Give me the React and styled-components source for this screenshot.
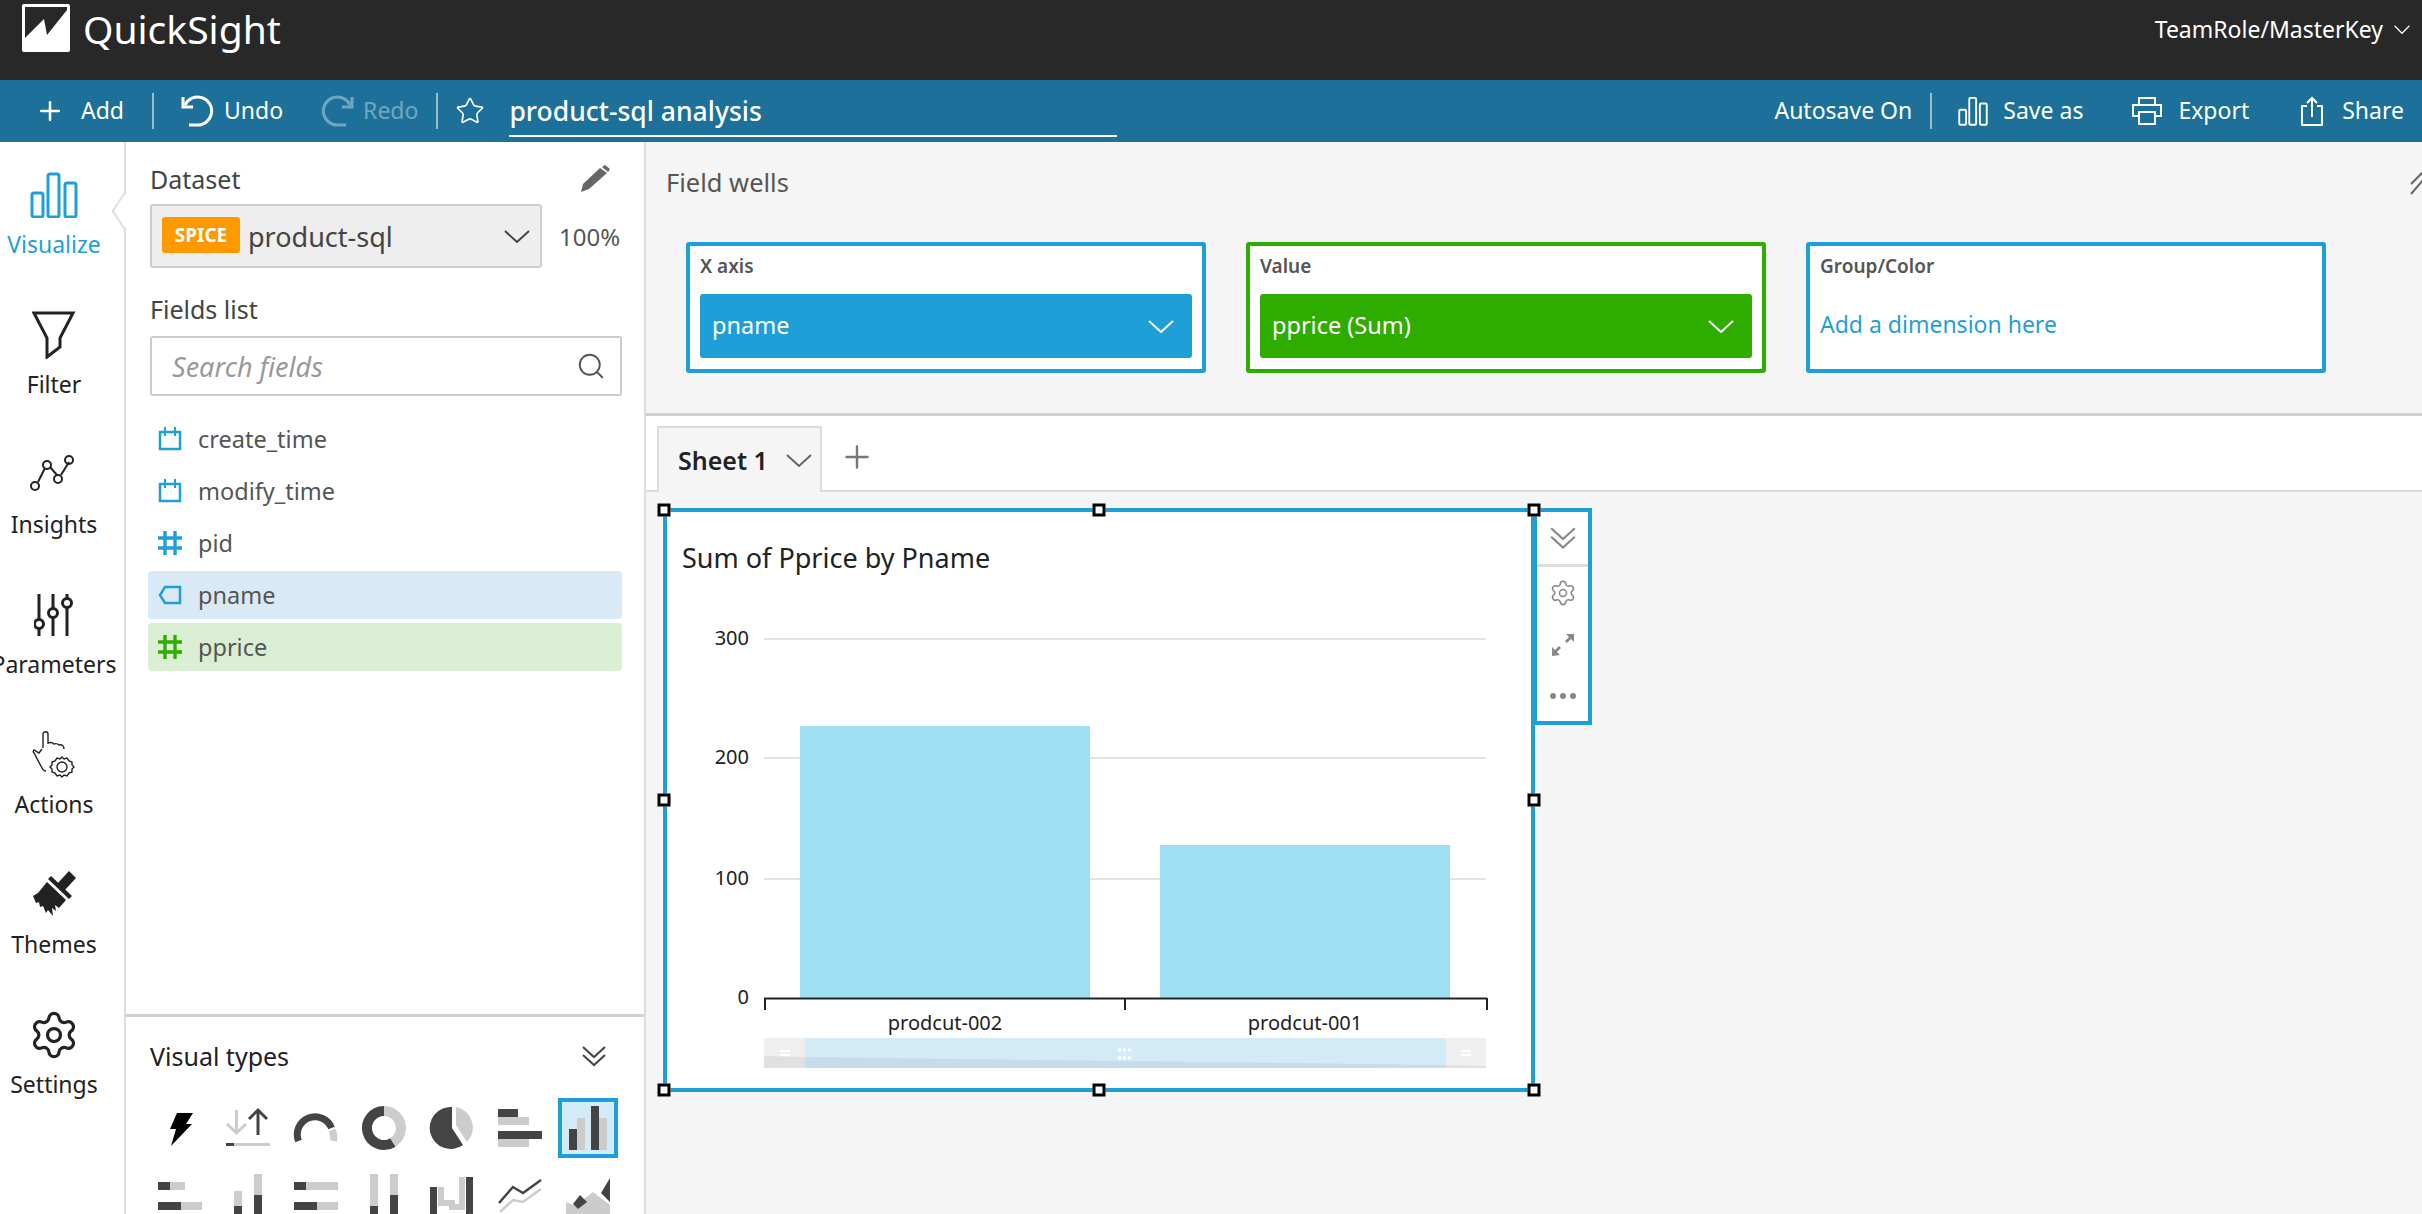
import React from "react";
import styled, { createGlobalStyle } from "styled-components";
import { Plus, Star, Search, Settings } from "lucide-react";

const BLUE = "#1f9fd8";
const GREEN = "#2eac00";

const GlobalStyle = createGlobalStyle`
  html, body { margin: 0; padding: 0; height: 100%; overflow: hidden; background: #fff; }
  body { font-family: "Noto Sans", "Open Sans", sans-serif; color: #222; }
  * { box-sizing: border-box; }
`;

const Page = styled.div`
  width: 2422px;
  height: 1214px;
  display: flex;
  flex-direction: column;
  overflow: hidden;
`;

/* top bars */
const Header = styled.header`
  height: 80px;
  flex: none;
  background: #282828;
  display: flex;
  justify-content: space-between;
  color: #fff;
`;
const Brand = styled.div`
  display: flex;
  align-items: flex-start;
  gap: 13px;
  padding: 4px 0 0 22px;
`;
const BrandName = styled.div`
  font-size: 39px;
  line-height: 49px;
`;
const User = styled.div`
  display: flex;
  align-items: center;
  gap: 11px;
  height: 58px;
  padding-right: 12px;
  font-size: 23px;
`;
const Toolbar = styled.div`
  height: 62px;
  flex: none;
  background: #1c7099;
  display: flex;
  align-items: center;
  justify-content: space-between;
  color: #fff;
  font-size: 23px;
`;
const ToolGroup = styled.div`
  display: flex;
  align-items: center;
`;
const ToolButton = styled.div`
  display: flex;
  align-items: center;
  gap: ${(p) => p.$gap || 12}px;
  margin-left: ${(p) => p.$ml || 0}px;
  opacity: ${(p) => (p.$off ? 0.38 : 1)};
  span { margin-top: -2px; }
`;
const Sep = styled.div`
  width: 2px;
  height: 36px;
  background: rgba(255, 255, 255, 0.55);
  margin-left: ${(p) => p.$ml}px;
`;
const TitleField = styled.div`
  width: 608px;
  height: 46px;
  margin: 6px 0 0 24px;
  border-bottom: 2px solid #fff;
  font-size: 26.5px;
  line-height: 40px;
  font-weight: 500;
`;
const ToolEnd = styled.div`
  width: 18px;
`;

/* body */
const Body = styled.div`
  flex: 1;
  display: flex;
  min-height: 0;
`;
const Rail = styled.nav`
  width: 126px;
  flex: none;
  border-right: 2px solid #ddd;
  padding-top: 23px;
  position: relative;
`;
const RailItem = styled.div`
  height: 140px;
  display: flex;
  flex-direction: column;
  align-items: center;
  width: 108px;
  color: ${(p) => (p.$active ? BLUE : "#222")};
`;
const RailIcon = styled.div`
  height: 60px;
  display: flex;
  align-items: center;
  justify-content: center;
`;
const RailLabel = styled.div`
  margin-top: 4px;
  font-size: 23px;
  line-height: 30px;
  white-space: nowrap;
`;
const Notch = styled.div`
  position: absolute;
  top: 58px;
  right: -2px;
  width: 22px;
  height: 22px;
  margin-right: -9px;
  transform: rotate(45deg) skew(12deg, 12deg);
  background: #fff;
  border-left: 2px solid #ddd;
  border-bottom: 2px solid #ddd;
  z-index: 1;
`;

const Panel = styled.aside`
  width: 520px;
  flex: none;
  border-right: 2px solid #ddd;
  display: flex;
  flex-direction: column;
  overflow: hidden;
  position: relative;
`;
const FieldsPane = styled.div`
  height: 875px;
  flex: none;
  padding: 20px 22px 0 24px;
  border-bottom: 3px solid #d0d0d0;
`;
const PaneHead = styled.div`
  display: flex;
  justify-content: space-between;
  align-items: center;
  height: 34px;
  margin-top: ${(p) => p.$mt || 0}px;
  font-size: 25px;
  color: ${(p) => p.$color || "#444"};
  padding-right: ${(p) => p.$pr || 0}px;
`;
const DatasetRow = styled.div`
  display: flex;
  align-items: center;
  margin-top: 8px;
  gap: 17px;
`;
const DatasetSelect = styled.div`
  width: 392px;
  height: 64px;
  background: #eee;
  border: 2px solid #ccc;
  border-radius: 3px;
  display: flex;
  align-items: center;
  padding: 0 10px 0 10px;
`;
const Spice = styled.div`
  width: 78px;
  height: 36px;
  margin-top: -2px;
  border-radius: 3px;
  background: #ff9900;
  color: #fff;
  font-weight: 700;
  font-size: 19px;
  display: flex;
  align-items: center;
  justify-content: center;
`;
const DatasetName = styled.div`
  flex: 1;
  margin-left: 8px;
  font-size: 27px;
  color: #444;
`;
const Percent = styled.div`
  font-size: 24px;
  color: #555;
`;
const SearchBox = styled.div`
  width: 472px;
  height: 60px;
  margin-top: 10px;
  border: 2px solid #ccc;
  border-radius: 3px;
  padding: 0 14px 0 20px;
  display: flex;
  align-items: center;
  justify-content: space-between;
  font-size: 27px;
  font-style: italic;
  color: #999;
`;
const FieldList = styled.div`
  margin: 19px 0 0 -2px;
  display: flex;
  flex-direction: column;
  gap: 4px;
  width: 474px;
`;
const FieldRow = styled.div`
  height: 48px;
  border-radius: 4px;
  background: ${(p) => p.$bg || "transparent"};
  display: flex;
  align-items: center;
  gap: 16px;
  padding-left: 10px;
  font-size: 23.5px;
  color: #555;
`;
const TypesPane = styled.div`
  padding: 22px 0 0 24px;
  flex: 1;
`;
const TypeGrid = styled.div`
  display: grid;
  grid-template-columns: repeat(7, 68px);
  grid-auto-rows: 60px;
  row-gap: 12px;
  margin: 25px 0 0 0;
`;
const TypeCell = styled.div`
  width: 60px;
  height: 60px;
  border: ${(p) => (p.$selected ? `4px solid ${BLUE}` : "0")};
  background: ${(p) => (p.$selected ? "#d2ebf7" : "transparent")};
  position: relative;
  svg { position: absolute; left: ${(p) => (p.$selected ? -4 : 0)}px; top: ${(p) => (p.$selected ? -4 : 0)}px; }
`;

/* main */
const Main = styled.main`
  flex: 1;
  display: flex;
  flex-direction: column;
  min-width: 0;
`;
const Wells = styled.section`
  height: 274px;
  flex: none;
  background: #f5f5f5;
  border-bottom: 3px solid #d0d0d0;
  padding: 24px 0 0 20px;
  position: relative;
`;
const WellsTitle = styled.div`
  font-size: 25.5px;
  line-height: 32px;
  color: #555;
`;
const WellRow = styled.div`
  display: flex;
  gap: 40px;
  margin: 44px 0 0 20px;
`;
const Well = styled.div`
  width: 520px;
  height: 131px;
  background: #fff;
  border: 4px solid ${(p) => p.$color};
  border-radius: 3px;
  padding: 7px 10px 10px;
`;
const WellLabel = styled.div`
  font-size: 19px;
  line-height: 26px;
  font-weight: 600;
  color: #555;
`;
const Pill = styled.div`
  height: 64px;
  margin-top: 15px;
  border-radius: 3px;
  background: ${(p) => p.$color};
  color: #fff;
  font-size: 23.5px;
  padding: 0 18px 0 12px;
  display: flex;
  align-items: center;
  justify-content: space-between;
  span { margin-top: -2px; }
`;
const AddHint = styled.div`
  margin-top: 30px;
  font-size: 23px;
  line-height: 30px;
  color: ${BLUE};
`;
const CollapseMark = styled.div`
  position: absolute;
  right: 0;
  top: 28px;
  color: #666;
`;
const TabBar = styled.div`
  height: 76px;
  flex: none;
  border-bottom: 2px solid #ddd;
  display: flex;
  align-items: flex-end;
  padding-left: 11px;
`;
const Tab = styled.div`
  width: 165px;
  height: 66px;
  margin-bottom: -2px;
  background: #f5f5f5;
  border: 2px solid #ddd;
  border-bottom: 0;
  display: flex;
  align-items: center;
  gap: 18px;
  padding-left: 19px;
  font-size: 25px;
  font-weight: 600;
  color: #222;
`;
const AddTab = styled.div`
  margin: 0 0 15px 17px;
  color: #777;
  display: flex;
`;
const Canvas = styled.div`
  flex: 1;
  background: #f5f5f5;
  padding: 16px 0 0 17px;
  display: flex;
  align-items: flex-start;
`;
const Visual = styled.div`
  width: 872px;
  height: 584px;
  background: #fff;
  border: 4px solid ${BLUE};
  position: relative;
`;
const Handle = styled.div`
  position: absolute;
  left: calc(-3px + ${(p) => p.$x} * 8.7px);
  top: calc(-2px + ${(p) => p.$y} * 5.8px);
  width: 13px;
  height: 13px;
  transform: translate(-50%, -50%);
  background: #fff;
  border: 3px solid #000;
  z-index: 2;
`;
const VisualTitle = styled.div`
  padding: 28px 0 0 15px;
  font-size: 27px;
  line-height: 36px;
  color: #222;
`;
const ChartSvg = styled.svg`
  position: absolute;
  left: 0;
  top: 0;
  text {
    font-family: "Noto Sans", "Open Sans", sans-serif;
    font-size: 20px;
    fill: #222;
  }
`;
const VisualTools = styled.div`
  width: 58px;
  height: 217px;
  margin-left: -1px;
  background: #fff;
  border: 4px solid ${BLUE};
  border-left-width: 3px;
  display: flex;
  flex-direction: column;
  align-items: center;
  color: #888;
`;
const VisualTool = styled.div`
  height: ${(p) => p.$h}px;
  width: 100%;
  display: flex;
  align-items: center;
  justify-content: center;
  border-bottom: ${(p) => (p.$line ? "3px solid #ddd" : "0")};
`;

/* drawings */
const Logo = () => (
  <svg width="48" height="48" viewBox="0 0 48 48">
    <rect width="48" height="48" rx="2" fill="#fff" />
    <path d="M3 3H45V6L25 31L22 15L3 34Z" fill="#282828" />
  </svg>
);
const BarsIcon = ({ w = 48, h = 46, sw = 3 }) => (
  <svg width={w} height={h} viewBox="0 0 48 46" fill="none" stroke="currentColor" strokeWidth={sw}>
    <rect x="2" y="21" width="11" height="24" rx="2" />
    <rect x="18" y="2" width="11" height="43" rx="2" />
    <rect x="35" y="11" width="11" height="34" rx="2" />
  </svg>
);
const UndoIcon = ({ flip }) => (
  <svg width="34" height="32" viewBox="0 0 34 32" fill="none" stroke="currentColor" strokeWidth="3"
    style={flip ? { transform: "scaleX(-1)" } : undefined}>
    <path d="M5 10A14 14 0 1 1 17 30H9" />
    <path d="M3 2V12H13" />
  </svg>
);
const PrinterIcon = () => (
  <svg width="30" height="28" viewBox="0 0 30 28" fill="none" stroke="currentColor" strokeWidth="2">
    <path d="M7 19H1V8h28v11h-6" />
    <path d="M7 8V1h16v7" />
    <rect x="7" y="15" width="16" height="12" />
  </svg>
);
const ShareIcon = () => (
  <svg width="22" height="30" viewBox="0 0 22 30" fill="none" stroke="currentColor" strokeWidth="2">
    <path d="M6 10H1v19h20V10h-5" />
    <path d="M11 21V2M6 7l5-5 5 5" />
  </svg>
);
const PencilIcon = () => (
  <svg width="30" height="28" viewBox="0 0 30 28" fill="#666">
    <path d="M1 27l2-8L20 3l7 5L9 24z" />
    <path d="M22 2l3-2 5 4-2 3z" />
  </svg>
);
const Chevron = ({ w = 26, h = 13, sw = 2, color = "currentColor" }) => (
  <svg width={w} height={h} viewBox="0 0 26 13" fill="none" stroke={color} strokeWidth={sw} preserveAspectRatio="none">
    <path d="M1 1l12 11L25 1" />
  </svg>
);
const DoubleChevron = ({ size = 26, color = "#444" }) => (
  <svg width={size} height={size * 0.85} viewBox="0 0 26 22" fill="none" stroke={color} strokeWidth="2">
    <path d="M2 2l11 10L24 2M2 10l11 10 11-10" />
  </svg>
);
const FilterIcon = () => (
  <svg width="44" height="48" viewBox="0 0 44 48" fill="none" stroke="currentColor" strokeWidth="3">
    <path d="M2 2H41L28 27V36L15 46V27Z" />
  </svg>
);
const InsightsIcon = () => (
  <svg width="48" height="40" viewBox="0 0 48 40" fill="none" stroke="currentColor" strokeWidth="2">
    <path d="M8 27L15 13M20 12L27 20M31 20L39 7" />
    <circle cx="5" cy="31" r="4" />
    <circle cx="17" cy="10" r="4" />
    <circle cx="28" cy="24" r="4" />
    <circle cx="39" cy="5" r="4" />
  </svg>
);
const ParamsIcon = () => (
  <svg width="40" height="44" viewBox="0 0 40 44" fill="none" stroke="currentColor" strokeWidth="3">
    <path d="M5 1V26M5 36V43M19 1V15M19 25V43M33 1V5M33 15V43" />
    <circle cx="5" cy="31" r="4.5" />
    <circle cx="19" cy="20" r="4.5" />
    <circle cx="33" cy="10" r="4.5" />
  </svg>
);
const ActionsIcon = () => (
  <svg width="44" height="48" viewBox="0 0 44 48" fill="none" stroke="currentColor" strokeWidth="1.4">
    <path d="M11 17V3c0-3 5-3 5 0v9c3-1 5 0 6 1 3-1 4 0 5 1 3-1 5 1 5 4" />
    <path d="M10 18L7 22l-5-3c-1 1-1 2 0 3l8 15c1 2 2 3 4 3" />
    <circle cx="30" cy="36" r="5" />
    <path d="M30 26l2 2 3-1 2 3 3 1v3l2 2-2 2v3l-3 1-2 3-3-1-2 2-2-2-3 1-2-3-3-1v-3l-2-2 2-2v-3l3-1 2-3 3 1z" />
  </svg>
);
const ThemesIcon = () => (
  <svg width="50" height="50" viewBox="0 0 50 50" fill="currentColor">
    <path d="M40 1l7 7-12 13-7-7z" />
    <path d="M19 9l3-3 21 20-3 3z" />
    <path d="M18 12l19 18-7 8-4-3 1 6-4-3 1 8-5-6-2 3-3-7-3 1-1-5-3 1-3-7 5-3z" />
  </svg>
);
const CalendarIcon = () => (
  <svg width="24" height="24" viewBox="0 0 24 24" fill="none" stroke={BLUE} strokeWidth="2.5">
    <path d="M2 5H22V22H2Z" />
    <path d="M7 0V9M17 0V9" strokeWidth="2" />
  </svg>
);
const HashIcon = ({ color }) => (
  <svg width="24" height="26" viewBox="0 0 24 26" fill="none" stroke={color} strokeWidth="3.4">
    <path d="M7 1V25M17 1V25M0 8H24M0 18H24" />
  </svg>
);
const TagIcon = () => (
  <svg width="24" height="20" viewBox="0 0 24 20" fill="none" stroke={BLUE} strokeWidth="2.5">
    <path d="M7 2H22V18H7L2 10Z" />
  </svg>
);
const ExpandIcon = () => (
  <svg width="24" height="24" viewBox="0 0 24 24" fill="#888">
    <path d="M15 1h8v8l-3-3-4 4-2-2 4-4z" />
    <path d="M1 23v-9l3 3 4-4 2 2-4 4 3 3z" />
  </svg>
);
const DotsIcon = () => (
  <svg width="28" height="8" viewBox="0 0 28 8" fill="#888">
    <circle cx="4" cy="4" r="3" />
    <circle cx="14" cy="4" r="3" />
    <circle cx="24" cy="4" r="3" />
  </svg>
);

const D = "#444";
const G = "#ccc";
const Rects = ({ items }) => items.map(([x, y, w, h, c], i) => <rect key={i} x={x} y={y} width={w} height={h} fill={c} />);
const visualTypes = [
  <path key="a" d="M27 15h16l-7 11h6L21 48l5-17h-6z" fill="#000" />,
  <g key="b" fill="none" strokeWidth="3">
    <path d="M18.5 12V35M9 26l9.5 9 9.5-9" stroke={G} />
    <path d="M40 12V37M31 21l9-9 9 9" stroke={D} />
    <rect x="8" y="45" width="44" height="3" fill={G} stroke="none" />
    <rect x="8" y="45" width="8" height="3" fill={D} stroke="none" />
  </g>,
  <g key="c" fill="none" strokeWidth="7">
    <path d="M12.5 43A17.5 17.5 0 0 1 45.5 30" stroke={D} />
    <path d="M46 32A17.5 17.5 0 0 1 47.5 43" stroke={G} />
  </g>,
  <g key="d" fill="none" strokeWidth="10">
    <path d="M39 44.4A17 17 0 1 1 30 13" stroke={D} />
    <path d="M30 13A17 17 0 0 1 39 44.4" stroke={G} />
  </g>,
  <g key="e">
    <path d="M30 30L41 47A21 21 0 1 1 30 9Z" fill={D} />
    <path d="M34 9A21 21 0 0 1 45 44L34 27Z" fill={G} />
  </g>,
  <Rects key="f" items={[[8, 11, 20, 8, D], [8, 19, 31, 8, G], [8, 33, 44, 8, D], [8, 41, 31, 8, G]]} />,
  <Rects key="g" items={[[11, 31, 8, 21, D], [19, 20, 8, 32, G], [33, 8, 8, 44, D], [41, 20, 8, 32, G]]} />,
  <Rects key="h" items={[[8, 12, 12, 8, D], [20, 12, 15, 8, G], [8, 32, 23, 8, D], [31, 32, 21, 8, G]]} />,
  <Rects key="i" items={[[16, 21, 8, 15, G], [16, 36, 8, 24, D], [36, 4, 8, 21, G], [36, 25, 8, 35, D]]} />,
  <Rects key="j" items={[[8, 12, 12, 8, D], [20, 12, 32, 8, G], [8, 32, 23, 8, D], [31, 32, 21, 8, G]]} />,
  <Rects key="k" items={[[16, 4, 8, 32, G], [16, 36, 8, 24, D], [36, 4, 8, 21, G], [36, 25, 8, 35, D]]} />,
  <g key="l">
    <path d="M19 17V33H30V37H40V7" fill="none" stroke={G} strokeWidth="6" />
    <rect x="8" y="17" width="7" height="43" fill={D} />
    <rect x="44" y="7" width="7" height="53" fill={D} />
  </g>,
  <g key="m" fill="none" strokeWidth="2.5">
    <path d="M9 33L23 17L33 23L51 10" stroke={D} />
    <path d="M10 42L23 30L33 32L51 19" stroke={G} />
  </g>,
  <g key="n">
    <path d="M8 32L17 36L35 22L52 35V60H8Z" fill={G} />
    <path d="M22 25l7 7-9 7-5-5z" fill={D} />
    <path d="M52 8V32L43 23z" fill={D} />
  </g>,
];

const railItems = [
  { label: "Visualize", icon: <BarsIcon />, active: true },
  { label: "Filter", icon: <FilterIcon /> },
  { label: "Insights", icon: <InsightsIcon /> },
  { label: "Parameters", icon: <ParamsIcon /> },
  { label: "Actions", icon: <ActionsIcon /> },
  { label: "Themes", icon: <ThemesIcon /> },
  { label: "Settings", icon: <Settings size={52} strokeWidth={1.5} /> },
];

const fields = [
  { name: "create_time", icon: <CalendarIcon /> },
  { name: "modify_time", icon: <CalendarIcon /> },
  { name: "pid", icon: <HashIcon color={BLUE} /> },
  { name: "pname", icon: <TagIcon />, bg: "#d9e9f6" },
  { name: "pprice", icon: <HashIcon color={GREEN} />, bg: "#d9eed3" },
];

// chart numbers are page pixels, the viewBox starts at the visual's origin
const ox = 667;
const oy = 512;
const BarChart = () => (
  <ChartSvg width="864" height="576" viewBox={`${ox} ${oy} 864 576`}>
    {[[639, "300"], [758, "200"], [879, "100"]].map(([y, t]) => (
      <g key={t}>
        <line x1="764" x2="1486" y1={y} y2={y} stroke="#e2e2e2" strokeWidth="2" />
        <text x="749" y={y + 6} textAnchor="end">{t}</text>
      </g>
    ))}
    <text x="749" y="1004" textAnchor="end">0</text>
    <rect x="800" y="726" width="290" height="272" fill="#9edff2" />
    <rect x="1160" y="845" width="290" height="153" fill="#9edff2" />
    <path d="M764 998.5H1487M765 998V1010M1125 998V1010M1487 998V1010" stroke="#222" strokeWidth="2" fill="none" />
    <text x="945" y="1030" textAnchor="middle">prodcut-002</text>
    <text x="1305" y="1030" textAnchor="middle">prodcut-001</text>
    <rect x="764" y="1038" width="722" height="30" fill="#efefef" />
    <path d="M764 1056L805 1057V1068H764ZM1446 1065L1486 1066V1068H1446Z" fill="#e0e0e0" />
    <rect x="805" y="1038" width="641" height="30" fill="#d3ebf7" />
    <path d="M805 1057L1446 1065V1068H805Z" fill="#c5dde9" />
    <path d="M780 1051h10M780 1055h10M1461 1051h10M1461 1055h10" stroke="#fff" strokeWidth="2" />
    <path d="M1118 1050h14M1118 1058h14" stroke="#fff" strokeWidth="3" strokeDasharray="3 2" />
  </ChartSvg>
);

const handles = [[0, 0], [50, 0], [100, 0], [0, 50], [100, 50], [0, 100], [50, 100], [100, 100]];

export default function App() {
  return (
    <Page>
      <GlobalStyle />
      <Header>
        <Brand>
          <Logo />
          <BrandName>QuickSight</BrandName>
        </Brand>
        <User>
          TeamRole/MasterKey
          <Chevron w={16} h={9} sw={2} />
        </User>
      </Header>
      <Toolbar>
        <ToolGroup>
          <ToolButton $ml={35} $gap={16}><Plus size={30} strokeWidth={2} /><span>Add</span></ToolButton>
          <Sep $ml={28} />
          <ToolButton $ml={26} $gap={10}><UndoIcon /><span>Undo</span></ToolButton>
          <ToolButton $ml={38} $gap={8} $off><UndoIcon flip /><span>Redo</span></ToolButton>
          <Sep $ml={18} />
          <ToolButton $ml={17}><Star size={30} strokeWidth={1.3} /></ToolButton>
          <TitleField>product-sql analysis</TitleField>
        </ToolGroup>
        <ToolGroup>
          <ToolButton><span>Autosave On</span></ToolButton>
          <Sep $ml={18} />
          <ToolButton $ml={26} $gap={15}><BarsIcon w={30} h={30} sw={3} /><span>Save as</span></ToolButton>
          <ToolButton $ml={49} $gap={16}><PrinterIcon /><span>Export</span></ToolButton>
          <ToolButton $ml={52} $gap={19}><ShareIcon /><span>Share</span></ToolButton>
          <ToolEnd />
        </ToolGroup>
      </Toolbar>
      <Body>
        <Rail>
          <Notch />
          {railItems.map((item) => (
            <RailItem key={item.label} $active={item.active}>
              <RailIcon>{item.icon}</RailIcon>
              <RailLabel>{item.label}</RailLabel>
            </RailItem>
          ))}
        </Rail>
        <Panel>
          <FieldsPane>
            <PaneHead $pr={12}>Dataset<PencilIcon /></PaneHead>
            <DatasetRow>
              <DatasetSelect>
                <Spice>SPICE</Spice>
                <DatasetName>product-sql</DatasetName>
                <Chevron color="#444" />
              </DatasetSelect>
              <Percent>100%</Percent>
            </DatasetRow>
            <PaneHead $mt={24}>Fields list</PaneHead>
            <SearchBox>
              Search fields
              <Search size={30} strokeWidth={1.5} color="#555" />
            </SearchBox>
            <FieldList>
              {fields.map((f) => (
                <FieldRow key={f.name} $bg={f.bg}>{f.icon}{f.name}</FieldRow>
              ))}
            </FieldList>
          </FieldsPane>
          <TypesPane>
            <PaneHead $color="#222" $pr={37}>Visual types<DoubleChevron /></PaneHead>
            <TypeGrid>
              {visualTypes.map((v, i) => (
                <TypeCell key={i} $selected={i === 6}>
                  <svg width="60" height="60" viewBox="0 0 60 60">{v}</svg>
                </TypeCell>
              ))}
            </TypeGrid>
          </TypesPane>
        </Panel>
        <Main>
          <Wells>
            <WellsTitle>Field wells</WellsTitle>
            <WellRow>
              <Well $color={BLUE}>
                <WellLabel>X axis</WellLabel>
                <Pill $color={BLUE}><span>pname</span><Chevron /></Pill>
              </Well>
              <Well $color={GREEN}>
                <WellLabel>Value</WellLabel>
                <Pill $color={GREEN}><span>pprice (Sum)</span><Chevron /></Pill>
              </Well>
              <Well $color={BLUE}>
                <WellLabel>Group/Color</WellLabel>
                <AddHint>Add a dimension here</AddHint>
              </Well>
            </WellRow>
            <CollapseMark>
              <svg width="12" height="26" viewBox="0 0 12 26" fill="none" stroke="currentColor" strokeWidth="2">
                <path d="M1 14L14 1M1 24L14 9" />
              </svg>
            </CollapseMark>
          </Wells>
          <TabBar>
            <Tab>Sheet 1<Chevron color="#666" /></Tab>
            <AddTab><Plus size={36} strokeWidth={1.6} /></AddTab>
          </TabBar>
          <Canvas>
            <Visual>
              <VisualTitle>Sum of Pprice by Pname</VisualTitle>
              <BarChart />
              {handles.map(([x, y]) => (
                <Handle key={`${x}-${y}`} $x={x} $y={y} />
              ))}
            </Visual>
            <VisualTools>
              <VisualTool $h={55} $line><DoubleChevron size={28} color="#888" /></VisualTool>
              <VisualTool $h={52}><Settings size={28} strokeWidth={1.3} /></VisualTool>
              <VisualTool $h={52}><ExpandIcon /></VisualTool>
              <VisualTool $h={50}><DotsIcon /></VisualTool>
            </VisualTools>
          </Canvas>
        </Main>
      </Body>
    </Page>
  );
}
